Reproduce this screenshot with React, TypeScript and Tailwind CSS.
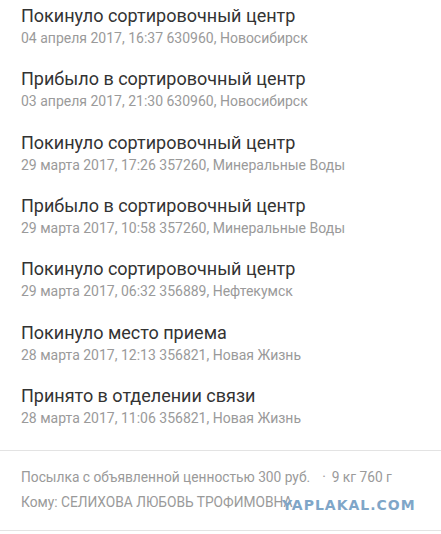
import React from "react";

const items = [
  ["Покинуло сортировочный центр", "04 апреля 2017, 16:37 630960, Новосибирск"],
  ["Прибыло в сортировочный центр", "03 апреля 2017, 21:30 630960, Новосибирск"],
  ["Покинуло сортировочный центр", "29 марта 2017, 17:26 357260, Минеральные Воды"],
  ["Прибыло в сортировочный центр", "29 марта 2017, 10:58 357260, Минеральные Воды"],
  ["Покинуло сортировочный центр", "29 марта 2017, 06:32 356889, Нефтекумск"],
  ["Покинуло место приема", "28 марта 2017, 12:13 356821, Новая Жизнь"],
  ["Принято в отделении связи", "28 марта 2017, 11:06 356821, Новая Жизнь"],
];

export default function App() {
  return (
    <div
      className="w-[441px] h-[534px] bg-white overflow-hidden"
      style={{ fontFamily: "Roboto, 'Noto Sans', sans-serif" }}
    >
      <div className="pt-[5px]">
        {items.map(([t, s], i) => (
          <div key={i} className="h-[63.33px] pl-[21px]">
            <div className="text-[18px] leading-[22px] text-[#333333]">{t}</div>
            <div className="text-[14px] leading-[20px] text-[#9a9a9a] mt-[1px]">{s}</div>
          </div>
        ))}
      </div>
      <div className="mt-[2px] border-t border-[#e3e3e3]">
        <div className="pl-[21px] pt-[14px] pb-[16px] text-[13.75px] leading-[24.4px] text-[#9a9a9a]">
          <div className="flex items-center">
            <span>Посылка с объявленной ценностью 300 руб.</span>
            <span className="ml-[12px] mr-[6px]">·</span>
            <span>9 кг 760 г</span>
          </div>
          <div className="relative">
            Кому: СЕЛИХОВА ЛЮБОВЬ ТРОФИМОВНА
            <span
              className="absolute left-[261px] top-[3.5px] text-[14px] leading-[24px] font-bold tracking-[1px] text-[#7fa6c8]"
              style={{ fontFamily: "'DejaVu Sans', sans-serif" }}
            >
              YAPLAKAL.COM
            </span>
          </div>
        </div>
        <div className="border-t border-[#e3e3e3]" />
      </div>
    </div>
  );
}
